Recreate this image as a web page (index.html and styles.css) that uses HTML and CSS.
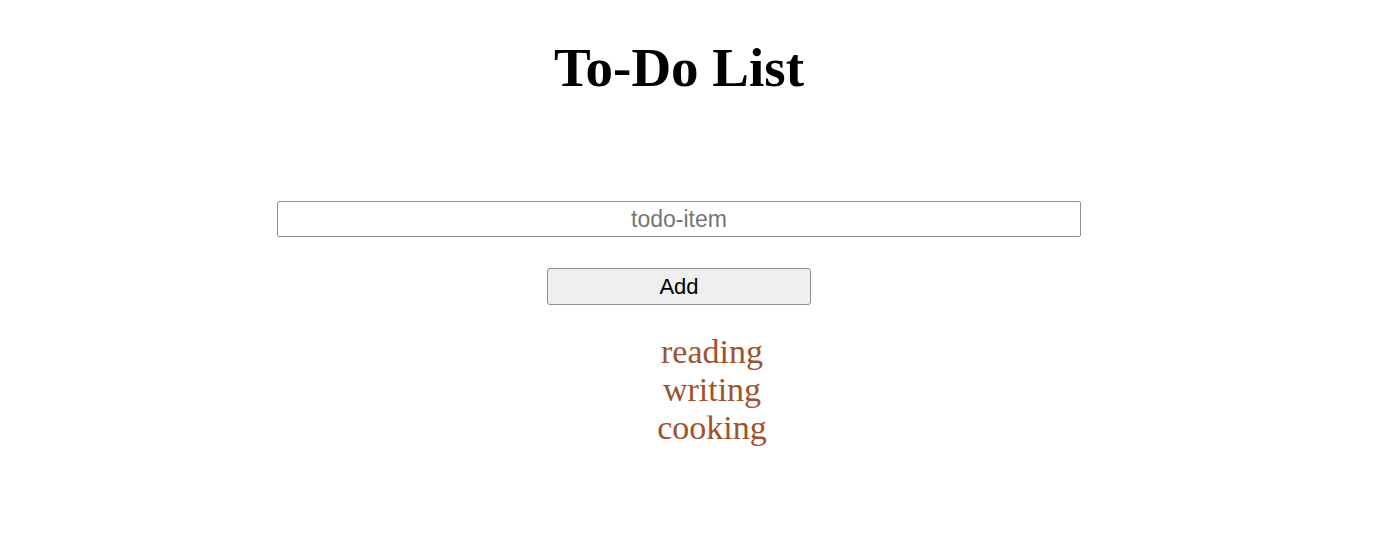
FILE: index.html
```html
<!DOCTYPE html>
<html>
<head>
<meta charset="utf-8">
<link rel="stylesheet" href="styles.css">
<title>To-Do List</title>
</head>
<body>
<div class="app">
  <h1 class="title">To-Do List</h1>
  <form class="todo-form">
    <input class="todo-input" type="text" placeholder="todo-item">
    <button class="add-btn" type="button">Add</button>
  </form>
  <ul class="todo-list">
    <li class="todo-item">reading</li>
    <li class="todo-item">writing</li>
    <li class="todo-item">cooking</li>
  </ul>
</div>
</body>
</html>
```
FILE: styles.css
```css
html, body {
  margin: 0;
  padding: 0;
  background: #ffffff;
}
.app {
  width: 1358px;
  display: flex;
  flex-direction: column;
  align-items: center;
  font-family: "Liberation Serif", "Times New Roman", serif;
}
.title {
  margin: 38px 0 0 0;
  font-size: 55px;
  font-weight: bold;
  line-height: 60px;
  color: #000;
}
.todo-form {
  margin-top: 103px;
  display: flex;
  flex-direction: column;
  align-items: center;
  gap: 31px;
}
.todo-input {
  box-sizing: border-box;
  width: 804px;
  height: 36px;
  border: 1px solid #8f8f8f;
  border-radius: 2px;
  padding: 0 4px;
  font-family: "Liberation Sans", Arial, sans-serif;
  font-size: 23px;
  text-align: center;
  color: #000;
  outline: none;
}
.todo-input::placeholder {
  color: #757575;
}
.add-btn {
  box-sizing: border-box;
  width: 264px;
  height: 37px;
  border: 1px solid #8f8f8f;
  border-radius: 3px;
  background: #efefef;
  font-family: "Liberation Sans", Arial, sans-serif;
  font-size: 22px;
  color: #000;
  padding: 0;
}
.todo-list {
  list-style: none;
  margin: 28px 0 0 0;
  padding: 0 0 0 66px;
  text-align: center;
}
.todo-item {
  font-size: 34px;
  line-height: 38px;
  color: #a0522d;
}
```
